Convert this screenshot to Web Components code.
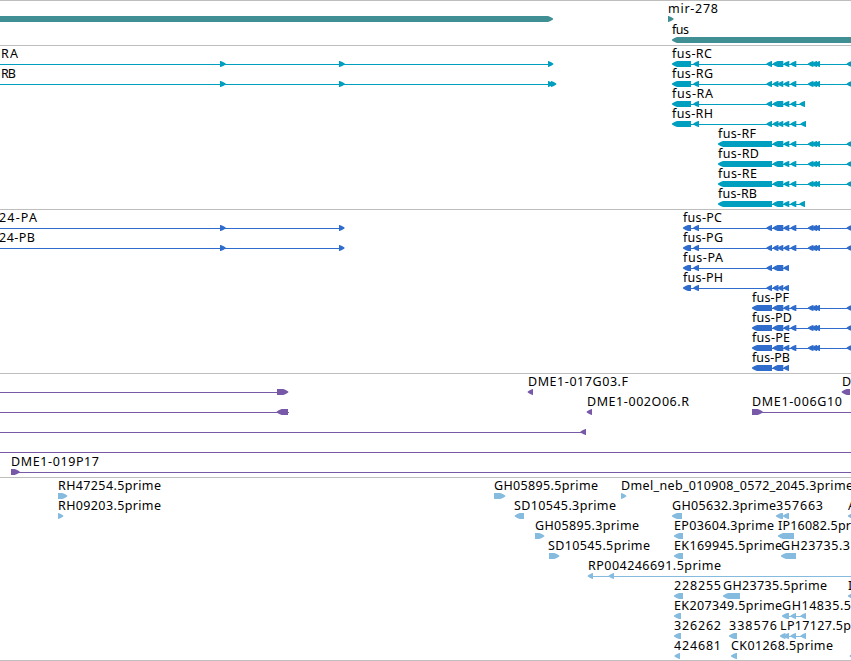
<!DOCTYPE html>
<html lang="en">
<head>
<meta charset="utf-8">
<title>Genome map</title>
<style>
body {
  margin: 0;
  background: white;
  overflow: hidden;
}
</style>
</head>
<body>
<genome-map></genome-map>

<script>
// blocks are [start, end] pairs, an intron line joins line[0] to line[1]
const tail = [[808, 813.5], [811.5, 817], [814.5, 820], [846.7, 852]];
const wide = [[772.7, 783.3]];
const split = [[772.7, 778.5], [777.7, 783.3]];
const mid = [[783.5, 789.3], [790.5, 796.3]];
const near = [[672, 691], [693.3, 699], [766.5, 772]];
const nearP = [[683, 691], [693.3, 699], [766.5, 772]];
const end5 = [[783.5, 789]];

const tracks = [
  { color: "#3f8f94", pitch: 21, pad: 2, rows: [
    [
      { dir: "right", blocks: [[-10, 553]] },
      { label: "mir-278", x: 668, w: 50, dir: "right", blocks: [[668, 673.5]] }
    ],
    [{ label: "fus", x: 672, w: 17, dir: "left", blocks: [[672, 862]] }]
  ]},
  { color: "#009fc0", pitch: 20, pad: 3, rows: [
    [
      { label: "RA", x: 1, w: 17, dir: "right", line: [0, 550], blocks: [[220, 225.7], [339, 344.7], [548, 553.3]] },
      { label: "fus-RC", x: 672, w: 40, dir: "left", line: [675, 851], blocks: [...near, ...wide, ...mid, ...tail] }
    ],
    [
      { label: "RB", x: 1, w: 15, dir: "right", line: [0, 550], blocks: [[220, 225.7], [339, 344.7], [548, 553.3], [551, 556.3]] },
      { label: "fus-RG", x: 672, w: 41, dir: "left", line: [675, 851], blocks: [...near, ...split, ...mid, ...tail] }
    ],
    [{ label: "fus-RA", x: 672, w: 41, dir: "left", line: [675, 805], blocks: [...near, ...wide, ...mid, [799.5, 805]] }],
    [{ label: "fus-RH", x: 672, w: 41, dir: "left", line: [675, 806], blocks: [...near, ...split, ...mid, [800.5, 806]] }],
    [{ label: "fus-RF", x: 718, w: 38, dir: "left", line: [720, 851], blocks: [[718, 772], ...wide, ...mid, ...tail] }],
    [{ label: "fus-RD", x: 718, w: 41, dir: "left", line: [720, 851], blocks: [[718, 772], ...wide, ...mid, ...tail] }],
    [{ label: "fus-RE", x: 718, w: 39, dir: "left", line: [720, 851], blocks: [[718, 772], ...wide, ...mid, ...tail] }],
    [{ label: "fus-RB", x: 718, w: 39, dir: "left", line: [720, 805], blocks: [[718, 772], ...wide, ...mid, [799.5, 805]] }]
  ]},
  { color: "#2f6ccc", pitch: 20, pad: 3, rows: [
    [
      { label: "24-PA", x: -1, w: 38, dir: "right", line: [0, 342], blocks: [[220, 225.7], [339, 344.5]] },
      { label: "fus-PC", x: 683, w: 39, dir: "left", line: [685, 851], blocks: [...nearP, ...wide, ...mid, ...tail] }
    ],
    [
      { label: "24-PB", x: -1, w: 36, dir: "right", line: [0, 342], blocks: [[220, 225.7], [339, 344.5]] },
      { label: "fus-PG", x: 683, w: 40, dir: "left", line: [685, 851], blocks: [...nearP, ...split, ...mid, ...tail] }
    ],
    [{ label: "fus-PA", x: 683, w: 40, dir: "left", line: [685, 788], blocks: [...nearP, ...wide, ...end5] }],
    [{ label: "fus-PH", x: 683, w: 40, dir: "left", line: [685, 788], blocks: [...nearP, ...split, ...end5] }],
    [{ label: "fus-PF", x: 752, w: 37, dir: "left", line: [754, 851], blocks: [[752, 772], ...wide, ...mid, ...tail] }],
    [{ label: "fus-PD", x: 752, w: 40, dir: "left", line: [754, 851], blocks: [[752, 772], ...wide, ...mid, ...tail] }],
    [{ label: "fus-PE", x: 752, w: 38, dir: "left", line: [754, 851], blocks: [[752, 772], ...wide, ...mid, ...tail] }],
    [{ label: "fus-PB", x: 752, w: 38, dir: "left", line: [754, 788], blocks: [[752, 772], ...wide, ...end5] }]
  ]},
  { color: "#7759a8", pitch: 20, pad: 3, rows: [
    [
      { dir: "right", line: [0, 280], blocks: [[277, 288.3]] },
      { label: "DME1-017G03.F", x: 528, w: 100, dir: "left", blocks: [[527.7, 533]] },
      { label: "D", x: 842, dir: "left", blocks: [[841.7, 850]] }
    ],
    [
      { dir: "left", line: [0, 289], blocks: [[276.7, 288]] },
      { label: "DME1-002O06.R", x: 587, w: 102, dir: "left", blocks: [[586.7, 592]] },
      { label: "DME1-006G10", x: 752, w: 90, dir: "right", line: [755, 851], blocks: [[752, 762.7]] }
    ],
    [{ dir: "left", line: [0, 584], blocks: [[580.5, 586]] }],
    [{ dir: "left", line: [0, 851], blocks: [] }],
    [{ label: "DME1-019P17", x: 11, w: 88, dir: "right", line: [14, 851], blocks: [[11, 19.7]] }]
  ]},
  { color: "#85bbde", pitch: 20, pad: 2, rows: [
    [
      { label: "RH47254.5prime", x: 58, w: 103, dir: "right", blocks: [[58, 67.3]] },
      { label: "GH05895.5prime", x: 494, w: 104, dir: "right", blocks: [[494, 505.3]] },
      { label: "Dmel_neb_010908_0572_2045.3prime", x: 621, w: 232, dir: "right", blocks: [[621, 626.3]] }
    ],
    [
      { label: "RH09203.5prime", x: 58, w: 103, dir: "right", blocks: [[58, 63.3]] },
      { label: "SD10545.3prime", x: 514, w: 102, dir: "left", blocks: [[514.7, 524]] },
      { label: "GH05632.3prime", x: 672, w: 104, dir: "left", blocks: [[672, 682]] },
      { label: "357663", x: 776, w: 47, dir: "left", blocks: [[776, 783], [783, 789]] },
      { label: "A", x: 848, dir: "left", blocks: [[848, 856]] }
    ],
    [
      { label: "GH05895.3prime", x: 535, w: 104, dir: "right", blocks: [[535, 544.3]] },
      { label: "EP03604.3prime", x: 674, w: 100, dir: "left", blocks: [[674, 683]] },
      { label: "IP16082.5pr", x: 778, w: 73, dir: "left", blocks: [[778, 794]] }
    ],
    [
      { label: "SD10545.5prime", x: 548, w: 102, dir: "right", blocks: [[549, 559.3]] },
      { label: "EK169945.5prime", x: 674, w: 108, dir: "left", blocks: [[674, 683]] },
      { label: "GH23735.3", x: 781, w: 69, dir: "left", blocks: [[781, 796]] }
    ],
    [{ label: "RP004246691.5prime", x: 588, w: 133, dir: "left", line: [590, 851], blocks: [[587.7, 593], [608.7, 614]] }],
    [
      { label: "228255", x: 674, w: 47, dir: "left", blocks: [[674, 683]] },
      { label: "GH23735.5prime", x: 723, w: 104, dir: "left", blocks: [[723, 740]] },
      { label: "I", x: 848, dir: "left", blocks: [[848, 856]] }
    ],
    [
      { label: "EK207349.5prime", x: 674, w: 108, dir: "left", blocks: [[674, 681]] },
      { label: "GH14835.5", x: 782, w: 69, dir: "left", line: [784, 806], blocks: [[782, 789], [790.5, 796], [800.5, 806]] }
    ],
    [
      { label: "326262", x: 674, w: 47, dir: "left", blocks: [[674, 681]] },
      { label: "338576", x: 729, w: 48, dir: "left", blocks: [[729, 737]] },
      { label: "LP17127.5p", x: 780, w: 71, dir: "left", line: [782, 806], blocks: [[780, 785.5], [783.5, 789], [790.5, 796], [800.5, 806]] }
    ],
    [
      { label: "424681", x: 674, w: 47, dir: "left", blocks: [[674.5, 680]] },
      { label: "CK01268.5prime", x: 731, w: 102, dir: "left", blocks: [[731, 737]] },
      { dir: "left", blocks: [[849.7, 855]] }
    ]
  ]}
];

class GenomeFeature extends HTMLElement {
  set data(d) {
    this.attachShadow({ mode: "open" });
    let svg = "";
    if (d.line) {
      svg += `<rect x="${d.line[0]}" y="18" width="${d.line[1] - d.line[0]}" height="1"/>`;
    }
    d.blocks.forEach(([a, b]) => {
      const head = Math.min(5, b - a);
      // tip and flat side swap ends with the strand
      const tip = d.dir === "left" ? a : b;
      const back = d.dir === "left" ? b : a;
      const s = d.dir === "left" ? 1 : -1;
      svg += `<path d="M${tip} 17.4L${tip + s * head * .5} 15.9L${tip + s * head} 15H${back}V21H${tip + s * head}L${tip + s * head * .5} 19.9L${tip} 18.4Z"/>`;
    });
    if (d.label) {
      const fit = d.w ? `textLength="${d.w}"` : "";
      svg += `<text x="${d.x}" y="12" ${fit}>${d.label}</text>`;
    }
    this.shadowRoot.innerHTML = `
      <style>
        :host { display: block; grid-area: 1 / 1; min-width: 0; }
        svg { display: block; width: 100%; height: 21px; fill: var(--track-color); overflow: hidden; }
        text { fill: black; font: 12.5px "Noto Sans", "DejaVu Sans", sans-serif; white-space: pre; }
      </style>
      <svg>${svg}</svg>`;
  }
}

class TrackRow extends HTMLElement {
  connectedCallback() {
    this.attachShadow({ mode: "open" });
    this.shadowRoot.innerHTML = `
      <style>
        :host { display: grid; height: var(--pitch); grid-template-columns: 100%; }
      </style>
      <slot></slot>`;
  }
}

class FeatureTrack extends HTMLElement {
  connectedCallback() {
    this.attachShadow({ mode: "open" });
    this.shadowRoot.innerHTML = `
      <style>
        :host {
          display: flex;
          flex-direction: column;
          border-bottom: 1px solid #bebebe;
        }
      </style>
      <slot></slot>`;
  }
}

class GenomeMap extends HTMLElement {
  connectedCallback() {
    this.attachShadow({ mode: "open" });
    this.shadowRoot.innerHTML = `
      <style>
        :host {
          display: block;
          width: 851px;
          border-top: 1px solid #bebebe;
          overflow: hidden;
        }
      </style>`;
    tracks.forEach((t) => this.addTrack(t));
  }

  addTrack(t) {
    const track = document.createElement("feature-track");
    track.style.setProperty("--track-color", t.color);
    track.style.setProperty("--pitch", t.pitch + "px");
    track.style.paddingBottom = t.pad + "px";
    t.rows.forEach((features) => {
      const row = document.createElement("track-row");
      features.forEach((f) => {
        const el = document.createElement("genome-feature");
        el.data = f;
        row.appendChild(el);
      });
      track.appendChild(row);
    });
    this.shadowRoot.appendChild(track);
  }
}

customElements.define("genome-feature", GenomeFeature);
customElements.define("track-row", TrackRow);
customElements.define("feature-track", FeatureTrack);
customElements.define("genome-map", GenomeMap);
</script>
</body>
</html>
